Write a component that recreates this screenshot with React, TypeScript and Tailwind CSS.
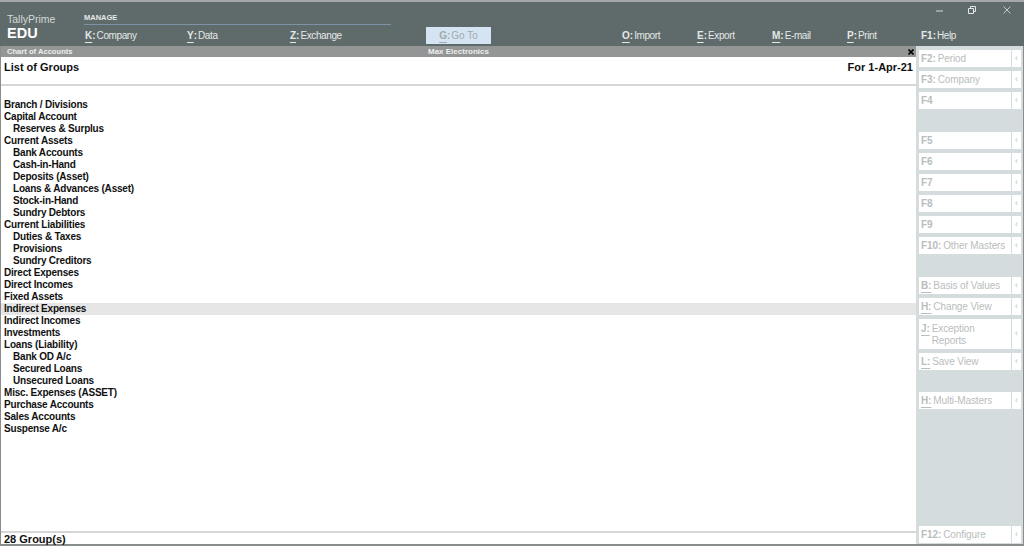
import type { ReactNode } from "react";

type Group = { name: string; sub?: boolean; active?: boolean };

const groups: Group[] = [
  { name: "Branch / Divisions" },
  { name: "Capital Account" },
  { name: "Reserves & Surplus", sub: true },
  { name: "Current Assets" },
  { name: "Bank Accounts", sub: true },
  { name: "Cash-in-Hand", sub: true },
  { name: "Deposits (Asset)", sub: true },
  { name: "Loans & Advances (Asset)", sub: true },
  { name: "Stock-in-Hand", sub: true },
  { name: "Sundry Debtors", sub: true },
  { name: "Current Liabilities" },
  { name: "Duties & Taxes", sub: true },
  { name: "Provisions", sub: true },
  { name: "Sundry Creditors", sub: true },
  { name: "Direct Expenses" },
  { name: "Direct Incomes" },
  { name: "Fixed Assets" },
  { name: "Indirect Expenses", active: true },
  { name: "Indirect Incomes" },
  { name: "Investments" },
  { name: "Loans (Liability)" },
  { name: "Bank OD A/c", sub: true },
  { name: "Secured Loans", sub: true },
  { name: "Unsecured Loans", sub: true },
  { name: "Misc. Expenses (ASSET)" },
  { name: "Purchase Accounts" },
  { name: "Sales Accounts" },
  { name: "Suspense A/c" },
];

function TopItem({ k, label, className, plain }: { k: string; label: string; className: string; plain?: boolean }) {
  return (
    <div className={`flex shrink-0 items-center text-[10px] text-[#e4e8e8] ${className}`}>
      <span className={`font-bold ${plain ? "" : "underline underline-offset-[3px]"}`}>{k}</span>
      <span className="font-bold">:</span>
      <span className="ml-[1px] tracking-[-0.4px]">{label}</span>
    </div>
  );
}

function SideButton({ children, className = "h-[17px]" }: { children: ReactNode; className?: string }) {
  return (
    <div className={`flex w-[102px] shrink-0 ${className}`}>
      <div className="flex w-[92px] items-center bg-white pl-[2px] pt-[1px] text-[10px] leading-[12px] tracking-[-0.1px] text-[#b9bdbd]">
        {children}
      </div>
      <div className="ml-[1px] flex w-[9px] items-center justify-center bg-white text-[9px] text-[#b9bdbd]">‹</div>
    </div>
  );
}

function Key({ k, label, under }: { k: string; label?: string; under?: boolean }) {
  return (
    <span>
      <span className={`font-bold ${under ? "underline underline-offset-[3px]" : ""}`}>{k}</span>
      {label ? <span className="ml-[2px]">{label}</span> : null}
    </span>
  );
}

export default function App() {
  return (
    <div className="flex h-[546px] w-[1024px] flex-col overflow-hidden bg-[#d5dcdd] font-['Liberation_Sans',sans-serif]">
      <div className="h-[2px] bg-[#a5a8a8]" />
      <header className="flex h-[44px] shrink-0 bg-[#5f6b6a] text-[#e4e8e8]">
        <div className="w-[84px] shrink-0 pl-[7px] pt-[11px]">
          <div className="text-[10.5px] leading-[12px] text-[#d5dada]">TallyPrime</div>
          <div className="text-[14.5px] font-bold leading-[16px] text-white">EDU</div>
        </div>
        <div className="w-[307px] shrink-0 pt-[10px]">
          <div className="border-b border-[#7c93a5] pb-[2px] pt-[1px] text-[7.5px] font-bold leading-[9px]">MANAGE</div>
          <div className="mt-[3px] flex h-[14px]">
            <TopItem k="K" label="Company" className="w-[103px] pl-[1px]" />
            <TopItem k="Y" label="Data" className="w-[103px]" />
            <TopItem k="Z" label="Exchange" className="" />
          </div>
        </div>
        <div className="ml-[35px] mt-[25px] flex h-[17px] w-[65px] shrink-0 items-center justify-center bg-[#d5e4f2] text-[10px] text-[#a2a9ad]">
          <span className="font-bold underline underline-offset-[3px]">G</span>
          <span className="font-bold">:</span>
          <span className="ml-[1px]">Go To</span>
        </div>
        <div className="flex min-w-0 flex-1 flex-col">
          <div className="flex h-[14px] shrink-0 items-center justify-end pr-[13px] pt-[2px]">
            <svg width="7" height="7" viewBox="0 0 7 7" stroke="#d5dada" fill="none">
              <path d="M0 4h7" />
            </svg>
            <svg width="8" height="8" viewBox="0 0 8 8" stroke="#e4e8e8" fill="none" className="ml-[25px]">
              <path d="M.5 2.5h5v5h-5z M2.5 2.5v-2h5v5h-2" />
            </svg>
            <svg width="8" height="8" viewBox="0 0 8 8" stroke="#c3caca" fill="none" className="ml-[27px]">
              <path d="M.5.5l7 7M7.5.5l-7 7" />
            </svg>
          </div>
          <div className="ml-[131px] mt-[12px] flex h-[14px]">
            <TopItem k="O" label="Import" className="w-[75px]" />
            <TopItem k="E" label="Export" className="w-[75px]" />
            <TopItem k="M" label="E-mail" className="w-[75px]" />
            <TopItem k="P" label="Print" className="w-[74px]" />
            <TopItem k="F1" label="Help" className="" plain />
          </div>
        </div>
      </header>
      <div className="flex min-h-0 flex-1">
        <main className="flex w-[916px] flex-col border-b-[2px] border-l-[1px] border-[#8a8d8d] bg-white text-[#111]">
          <div className="relative flex h-[11px] shrink-0 items-center bg-[#949696] pt-[1px] text-[7.6px] font-bold text-[#eceeee]">
            <span className="ml-[6px]">Chart of Accounts</span>
            <span className="absolute left-[427px] text-[8px]">Max Electronics</span>
            <svg width="6" height="6" viewBox="0 0 6 6" stroke="#000" strokeWidth="1.6" fill="none" className="absolute right-[2px] top-[3px]">
              <path d="M.5.5l5 5M5.5.5l-5 5" />
            </svg>
          </div>
          <div className="flex h-[29px] shrink-0 items-start justify-between border-b-2 border-[#d6d6d6] pl-[3px] pr-[3px] pt-[3px] text-[11px] font-bold leading-[14px]">
            <span>List of Groups</span>
            <span>For 1-Apr-21</span>
          </div>
          <div className="flex-1 pt-[13px]">
            {groups.map((g) => (
              <div
                key={g.name}
                className={`h-[12px] text-[10px] font-bold leading-[12px] tracking-[-0.2px] ${g.sub ? "pl-[12px]" : "pl-[3px]"} ${g.active ? "bg-[#e6e6e6]" : ""}`}
              >
                {g.name}
              </div>
            ))}
          </div>
          <div className="h-[13px] shrink-0 border-t-2 border-[#d6d6d6] pl-[3px] text-[11px] font-bold leading-[12px]">
            28 Group(s)
          </div>
        </main>
        <aside className="flex w-[108px] flex-col gap-[4px] border-b-[2px] border-r-[1px] border-[#8a8d8d] pb-[1px] pl-[3px] pt-[4px]">
          <SideButton><Key k="F2:" label="Period" /></SideButton>
          <SideButton><Key k="F3:" label="Company" /></SideButton>
          <SideButton><Key k="F4" /></SideButton>
          <div className="h-[15px] shrink-0" />
          <SideButton><Key k="F5" /></SideButton>
          <SideButton><Key k="F6" /></SideButton>
          <SideButton><Key k="F7" /></SideButton>
          <SideButton><Key k="F8" /></SideButton>
          <SideButton><Key k="F9" /></SideButton>
          <SideButton><Key k="F10:" label="Other Masters" /></SideButton>
          <div className="h-[15px] shrink-0" />
          <SideButton><Key k="B:" label="Basis of Values" under /></SideButton>
          <SideButton><Key k="H:" label="Change View" under /></SideButton>
          <SideButton className="h-[30px]">
            <div className="flex">
              <Key k="J:" under />
              <span className="ml-[2px]">Exception<br />Reports</span>
            </div>
          </SideButton>
          <SideButton><Key k="L:" label="Save View" under /></SideButton>
          <div className="h-[14px] shrink-0" />
          <SideButton><Key k="H:" label="Multi-Masters" under /></SideButton>
          <div className="flex-1" />
          <SideButton><Key k="F12:" label="Configure" /></SideButton>
        </aside>
      </div>
    </div>
  );
}
